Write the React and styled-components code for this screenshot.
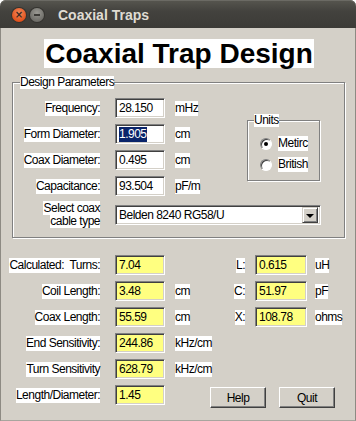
import React from 'react';
import styled, { createGlobalStyle } from 'styled-components';

const Global = createGlobalStyle`
  html, body { margin: 0; padding: 0; background: #fff; }
  body {
    font-family: "Liberation Sans", Arial, sans-serif;
    font-size: 12px;
    letter-spacing: -0.5px;
    color: #000;
  }
`;

const Window = styled.div`
  width: 356px;
  height: 421px;
  display: flex;
  flex-direction: column;
`;

const TitleBar = styled.div`
  height: 28px;
  flex: none;
  display: flex;
  align-items: center;
  padding-left: 12px;
  border-radius: 6px 6px 0 0;
  background: linear-gradient(#57564f, #43423e 40%, #3c3b37);
  box-shadow: inset 0 1px 0 #6b6a64;
  letter-spacing: 0;
`;

const Knob = styled.span`
  width: 14px;
  height: 14px;
  border-radius: 50%;
  margin-left: ${p => p.$gap || 0}px;
  margin-top: 2px;
  display: flex;
  align-items: center;
  justify-content: center;
  background: ${p => p.$close
    ? 'radial-gradient(circle at 50% 35%, #f58a5c, #e2521d 70%, #c8420f)'
    : 'radial-gradient(circle at 50% 35%, #9a9993, #6f6e69 70%, #5a5955)'};
  box-shadow: 0 0 0 1px #34332f;
  color: #3a2a22;
  font: bold 10px "DejaVu Sans", sans-serif;
  line-height: 1;
`;

const Dash = styled.span`
  width: 6px;
  height: 2px;
  background: #3c3b37;
`;

const Caption = styled.span`
  margin-left: 14px;
  margin-top: 1px;
  color: #dfdbd2;
  font: bold 14px "Liberation Sans", Arial, sans-serif;
`;

const Body = styled.div`
  flex: 1;
  display: flex;
  flex-direction: column;
  background: #d4d0c8;
  border-left: 1px solid #8d8a83;
  border-right: 1px solid #8d8a83;
  border-bottom: 1px solid #a8a59e;
  padding: 11px 10px 0 11px;
`;

const Heading = styled.h1`
  align-self: center;
  margin: 0 0 8px 1px;
  padding: 0 1px;
  background: #fff;
  font: bold 28px "Liberation Sans", Arial, sans-serif;
  letter-spacing: 0;
  line-height: 29px;
`;

const Group = styled.fieldset`
  margin: 0;
  min-width: 0;
  padding: ${p => p.$pad || '6px 0 6px 0'};
  border: 1px solid #808080;
  box-shadow: inset 1px 1px 0 #fff, 1px 1px 0 #fff;
`;

const Legend = styled.legend`
  margin-left: ${p => p.$indent || 7}px;
  padding: 0;
  background: #fff;
  line-height: 13px;
`;

const ParamGrid = styled.div`
  display: grid;
  grid-template-columns: 102px 60px 72px 73px;
  grid-template-rows: repeat(4, 26px) 32px;
  align-items: center;
`;

const Label = styled.span`
  grid-column: ${p => p.$col || 1};
  justify-self: end;
  margin-right: ${p => (p.$gap ?? 15)}px;
  background: #fff;
  line-height: 15px;
  white-space: pre;
  text-align: right;
`;

const Unit = styled.span`
  justify-self: start;
  background: #fff;
  line-height: 15px;
  white-space: nowrap;
`;

const Field = styled.div`
  box-sizing: border-box;
  width: ${p => p.$w || 50}px;
  height: 20px;
  padding-left: 3px;
  display: flex;
  align-items: center;
  background: ${p => (p.$calc ? '#ffff80' : '#fff')};
  border: 1px solid;
  border-color: #808080 #fff #fff #808080;
  box-shadow: inset 1px 1px 0 #404040, inset -1px -1px 0 #d4d0c8;
`;

const Selected = styled.span`
  background: #0a246a;
  color: #fff;
  line-height: 15px;
`;

const UnitsBox = styled(Group)`
  grid-column: 4;
  grid-row: 2 / span 2;
  align-self: start;
  margin-top: -7px;
`;

const RadioRow = styled.label`
  height: 21px;
  padding-left: 12px;
  display: flex;
  align-items: center;
  gap: 6px;
`;

const Radio = styled.span`
  box-sizing: border-box;
  width: 12px;
  height: 12px;
  border-radius: 50%;
  display: flex;
  align-items: center;
  justify-content: center;
  background: #fff;
  border: 1px solid;
  border-color: #808080 #fff #fff #808080;
  box-shadow: inset 1px 1px 0 #404040;
  &::after {
    content: '';
    width: 4px;
    height: 4px;
    border-radius: 50%;
    background: ${p => (p.$on ? '#000' : 'transparent')};
  }
`;

const CableLabel = styled(Label)`
  line-height: 13px;
  background: none;
  span { background: #fff; }
`;

const Combo = styled(Field)`
  grid-column: 2 / span 3;
  width: 206px;
  padding: 0 2px 0 3px;
  justify-content: space-between;
`;

const DropButton = styled.span`
  box-sizing: border-box;
  width: 16px;
  height: 16px;
  display: flex;
  align-items: center;
  justify-content: center;
  background: #d4d0c8;
  border: 1px solid;
  border-color: #d4d0c8 #404040 #404040 #d4d0c8;
  box-shadow: inset 1px 1px 0 #fff, inset -1px -1px 0 #808080;
  &::after {
    content: '';
    border-left: 4px solid transparent;
    border-right: 4px solid transparent;
    border-top: 4px solid #000;
    margin-top: 1px;
  }
`;

const ResultGrid = styled.div`
  margin-top: 14px;
  display: grid;
  grid-template-columns: 103px 60px 50px 30px 60px 30px;
  grid-auto-rows: 26px;
  align-items: center;
`;

const ButtonBar = styled.div`
  grid-column: 3 / -1;
  align-self: end;
  display: flex;
  gap: 13px;
  padding-left: 35px;
`;

const Button = styled.button`
  box-sizing: border-box;
  width: 56px;
  height: 21px;
  padding: 0;
  background: #d4d0c8;
  font: inherit;
  letter-spacing: inherit;
  color: #000;
  border: 1px solid;
  border-color: #fff #404040 #404040 #fff;
  box-shadow: inset -1px -1px 0 #808080;
`;

const params = [
  { label: 'Frequency:', value: '28.150', unit: 'mHz' },
  { label: 'Form Diameter:', value: '1.905', unit: 'cm', selected: true },
  { label: 'Coax Diameter:', value: '0.495', unit: 'cm' },
  { label: 'Capacitance:', value: '93.504', unit: 'pF/m' },
];

const results = [
  { label: 'Calculated:  Turns:', value: '7.04', unit: '', side: ['L:', '0.615', 'uH'] },
  { label: 'Coil Length:', value: '3.48', unit: 'cm', side: ['C:', '51.97', 'pF'] },
  { label: 'Coax Length:', value: '55.59', unit: 'cm', side: ['X:', '108.78', 'ohms'] },
  { label: 'End Sensitivity:', value: '244.86', unit: 'kHz/cm' },
  { label: 'Turn Sensitivity', value: '628.79', unit: 'kHz/cm' },
];

export default function App() {
  return (
    <Window>
      <Global />
      <TitleBar>
        <Knob $close>×</Knob>
        <Knob $gap={4}><Dash /></Knob>
        <Caption>Coaxial Traps</Caption>
      </TitleBar>
      <Body>
        <Heading>Coaxial Trap Design</Heading>

        <Group>
          <Legend>Design Parameters</Legend>
          <ParamGrid>
            {params.map((p, i) => (
              <React.Fragment key={p.label}>
                <Label>{p.label}</Label>
                <Field>{p.selected ? <Selected>{p.value}</Selected> : p.value}</Field>
                <Unit>{p.unit}</Unit>
                {i === 0 && (
                  <UnitsBox $pad="6px 0 5px 0">
                    <Legend $indent={6}>Units</Legend>
                    <RadioRow><Radio $on /><Unit>Metirc</Unit></RadioRow>
                    <RadioRow><Radio /><Unit>British</Unit></RadioRow>
                  </UnitsBox>
                )}
              </React.Fragment>
            ))}
            <CableLabel>
              <span>Select coax</span><br /><span>cable type</span>
            </CableLabel>
            <Combo>
              <span>Belden 8240 RG58/U</span>
              <DropButton />
            </Combo>
          </ParamGrid>
        </Group>

        <ResultGrid>
          {results.map(r => (
            <React.Fragment key={r.label}>
              <Label>{r.label}</Label>
              <Field $calc>{r.value}</Field>
              <Unit>{r.unit}</Unit>
              {r.side && (
                <>
                  <Label $col={4} $gap={10}>{r.side[0]}</Label>
                  <Field $calc $w={52}>{r.side[1]}</Field>
                  <Unit>{r.side[2]}</Unit>
                </>
              )}
            </React.Fragment>
          ))}
          <Label>Length/Diameter:</Label>
          <Field $calc>1.45</Field>
          <ButtonBar>
            <Button>Help</Button>
            <Button>Quit</Button>
          </ButtonBar>
        </ResultGrid>
      </Body>
    </Window>
  );
}
